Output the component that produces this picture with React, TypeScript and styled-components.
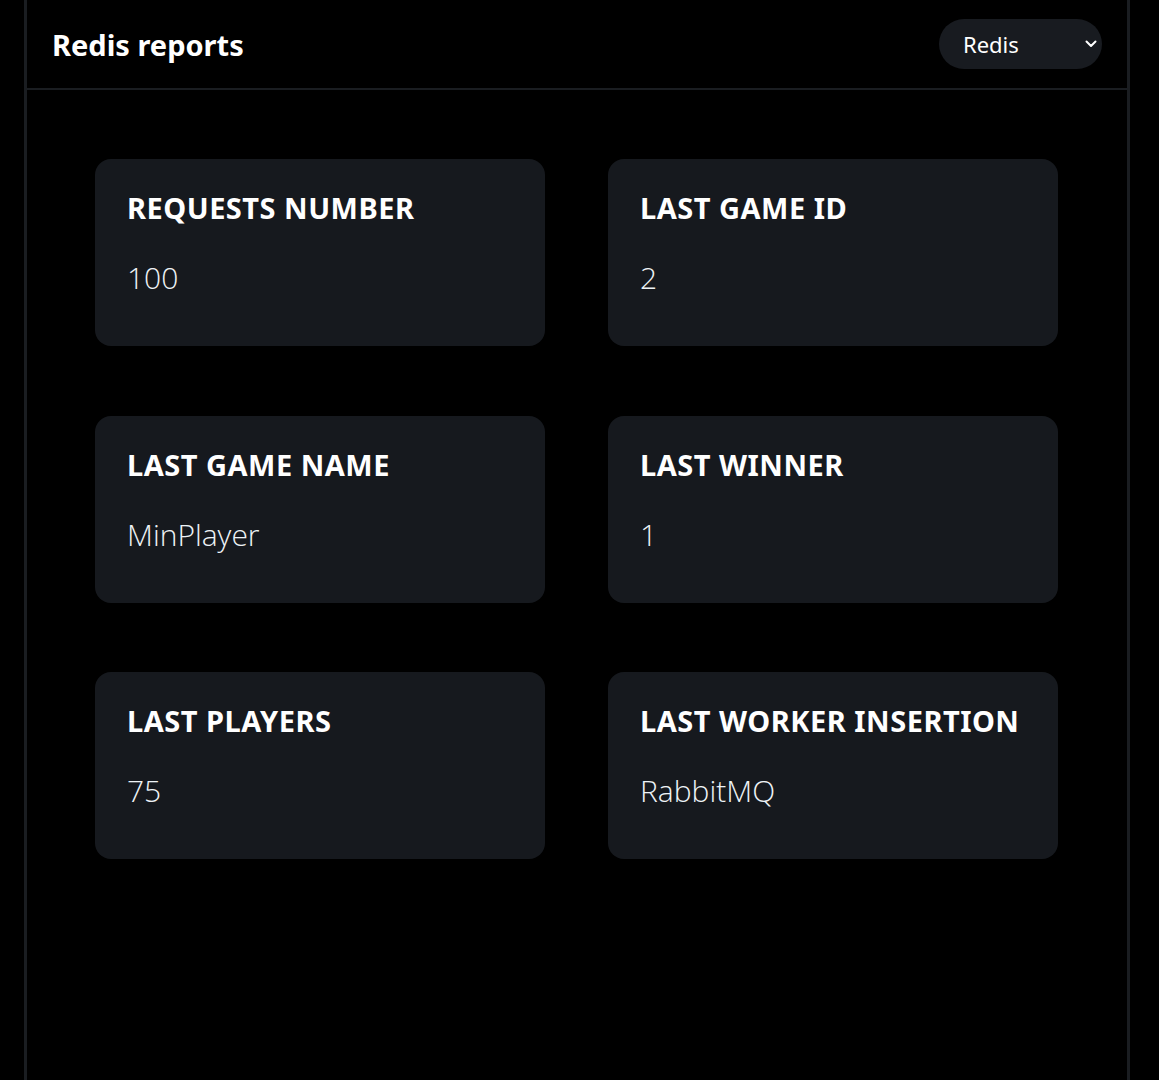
import React from "react";
import styled, { createGlobalStyle } from "styled-components";

const GlobalStyle = createGlobalStyle`
  html, body {
    margin: 0;
    padding: 0;
    background: #000;
  }
  body {
    font-family: "Noto Sans", "Open Sans", sans-serif;
    color: #fff;
  }
`;

const Page = styled.div`
  min-height: 1080px;
  background: #000;
  padding-left: 24px;
  box-sizing: border-box;
`;

const Panel = styled.main`
  width: 1106px;
  min-height: 1080px;
  box-sizing: border-box;
  border-left: 3px solid #1a1d21;
  border-right: 3px solid #1a1d21;
  display: flex;
  flex-direction: column;
`;

const Header = styled.header`
  height: 90px;
  box-sizing: border-box;
  border-bottom: 2px solid #1a1d21;
  display: flex;
  align-items: center;
  justify-content: space-between;
  padding: 0 25px 0 25px;
`;

const Title = styled.h1`
  margin: 0;
  font-size: 29px;
  font-weight: 700;
  color: #fff;
  letter-spacing: 0;
`;

const SelectWrap = styled.div`
  position: relative;
  width: 163px;
  height: 50px;
`;

const Select = styled.select`
  appearance: none;
  -webkit-appearance: none;
  width: 100%;
  height: 100%;
  border: none;
  outline: none;
  border-radius: 25px;
  background: #181b20;
  color: #fff;
  font-family: "Noto Sans", sans-serif;
  font-size: 22px;
  padding: 0 0 0 24px;
`;

const Chevron = styled.svg`
  position: absolute;
  right: 5px;
  top: 21px;
  pointer-events: none;
`;

const Grid = styled.section`
  display: grid;
  grid-template-columns: repeat(2, 450px);
  column-gap: 63px;
  row-gap: 69.5px;
  justify-content: start;
  padding: 69px 0 0 68px;
`;

const Card = styled.div`
  height: 187px;
  box-sizing: border-box;
  background: #16191e;
  border-radius: 16px;
  padding: 29px 32px 0 32px;
`;

const CardTitle = styled.h2`
  margin: 0;
  font-size: 29px;
  font-weight: 700;
  text-transform: uppercase;
  color: #fff;
  line-height: 40px;
  letter-spacing: 0.5px;
`;

const CardValue = styled.p`
  margin: 30px 0 0 0;
  font-family: "Open Sans", "Noto Sans", sans-serif;
  font-size: 30px;
  font-weight: 300;
  color: #eef3f6;
  line-height: 40px;
`;

const stats = [
  { label: "Requests number", value: "100" },
  { label: "Last game id", value: "2" },
  { label: "Last game name", value: "MinPlayer" },
  { label: "Last winner", value: "1" },
  { label: "Last players", value: "75" },
  { label: "Last worker insertion", value: "RabbitMQ" },
];

export default function App() {
  return (
    <>
      <GlobalStyle />
      <Page>
        <Panel>
          <Header>
            <Title>Redis reports</Title>
            <SelectWrap>
              <Select defaultValue="redis">
                <option value="redis">Redis</option>
                <option value="mysql">MySQL</option>
              </Select>
              <Chevron width="12" height="8" viewBox="0 0 12 8" fill="none">
                <path d="M1.5 1.5 L6 6 L10.5 1.5" stroke="#fff" strokeWidth="2" strokeLinecap="round" strokeLinejoin="round" />
              </Chevron>
            </SelectWrap>
          </Header>
          <Grid>
            {stats.map((s) => (
              <Card key={s.label}>
                <CardTitle>{s.label}</CardTitle>
                <CardValue>{s.value}</CardValue>
              </Card>
            ))}
          </Grid>
        </Panel>
      </Page>
    </>
  );
}
